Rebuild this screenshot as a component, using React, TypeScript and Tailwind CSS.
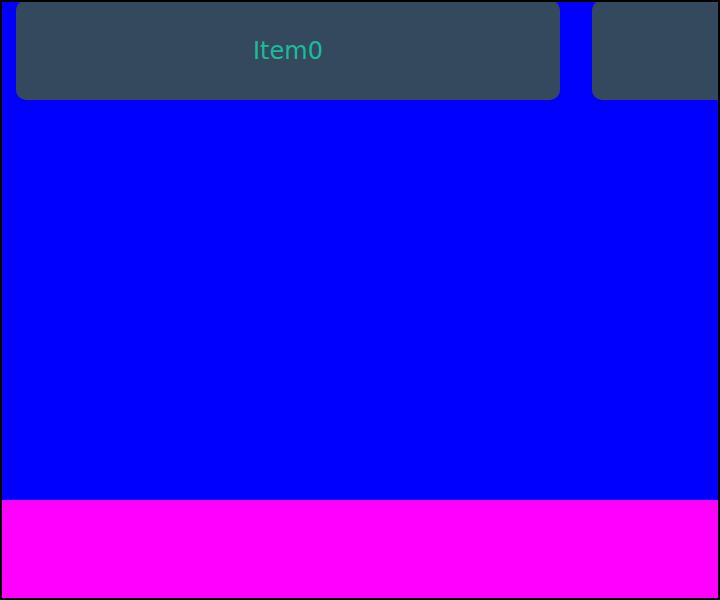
export default function App() {
  return (
    <div
      className="relative w-[720px] h-[600px] flex flex-col overflow-hidden"
      style={{ fontFamily: '"DejaVu Sans", sans-serif' }}
    >
      <div className="h-[500px] shrink-0 bg-[#0000ff] flex overflow-hidden">
        {[0, 1, 2].map((i) => (
          <div
            key={i}
            className="shrink-0 w-[544px] h-[100px] ml-4 mr-4 pt-[2px] rounded-[10px] bg-[#34495e] flex items-center justify-center text-[24px] text-[#1abc9c]"
          >
            Item{i}
          </div>
        ))}
      </div>
      <div className="h-[100px] shrink-0 bg-[#ff00ff]" />
      <div className="absolute inset-0 border-2 border-black pointer-events-none" />
    </div>
  );
}
